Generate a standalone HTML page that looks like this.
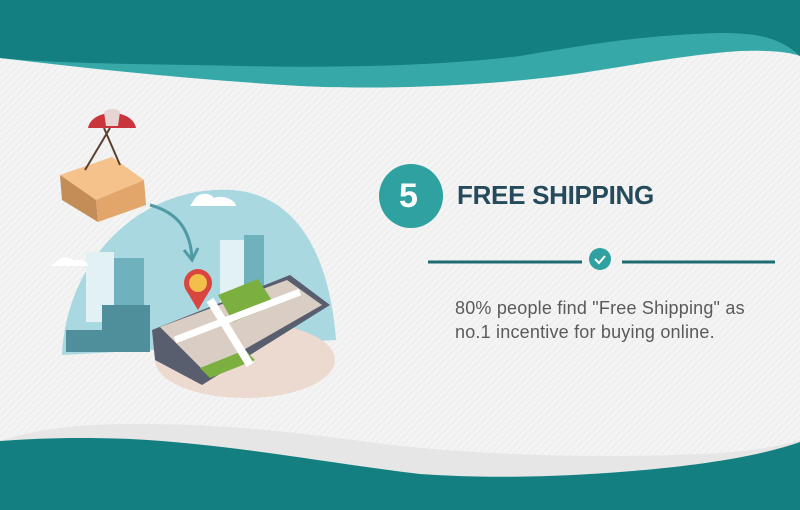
<!DOCTYPE html>
<html><head><meta charset="utf-8"><style>
html,body{margin:0;padding:0}
body{width:800px;height:510px;overflow:hidden;position:relative;background:#f2f2f2;font-family:"Liberation Sans",sans-serif}
.bg{position:absolute;inset:0;background:repeating-linear-gradient(135deg,#f4f4f4 0 3px,#efefef 3px 5px)}
</style></head><body>
<div class="bg"></div>
<svg width="800" height="510" style="position:absolute;left:0;top:0">
<path d="M0 0H800V56C790 52 770 50 740 51C680 55 620 68 560 76C480 86 380 90 300 86C200 80 100 70 0 58Z" fill="#37a8a8"/>
<path d="M0 0H800V56C780 38 760 33 720 33C640 35 580 46 520 56C440 66 340 68 240 66C150 64 60 64 0 58Z" fill="#137f80"/>
<path d="M0 441C40 428 80 424 140 424C240 424 320 436 400 446C500 456 600 458 700 454C750 452 780 446 800 440V510H0Z" fill="#e6e6e6"/>
<path d="M0 441C40 438 80 437 130 439C230 444 320 462 420 474C480 478 540 478 620 472C700 466 760 456 800 442V510H0Z" fill="#137f80"/>
<!-- illustration -->
<path d="M62 355C66 260 140 185 232 190C300 195 330 260 336 340Z" fill="#a9d8e0"/>
<rect x="86" y="252" width="28" height="70" fill="#e2f1f4"/>
<rect x="114" y="258" width="30" height="70" fill="#6fb1bc"/>
<rect x="220" y="240" width="24" height="80" fill="#e2f1f4"/>
<rect x="244" y="235" width="20" height="70" fill="#6fb1bc"/>
<path d="M66 330H102V305H150V352H66Z" fill="#4e8f9b"/>
<path d="M194 200c4-8 16-8 20-2 8-4 22 2 22 8h-46z" fill="#fff"/>
<path d="M56 262c4-6 14-6 18-1 6-3 14 1 14 5H50z" fill="#fff"/>
<path d="M150 205C176 212 190 228 192 258" stroke="#4f9aa4" stroke-width="3" fill="none"/>
<path d="M184 250l8 10 6-12" stroke="#4f9aa4" stroke-width="3" fill="none"/>
<ellipse cx="245" cy="360" rx="90" ry="38" fill="#ecd9cf"/>
<path d="M152 330L290 275L330 305L202 385L155 360Z" fill="#595e6e"/>
<path d="M160 327L287 280L322 305L205 372Z" fill="#d9cdc4"/>
<path d="M218 295L258 279L275 305L233 322Z" fill="#7bb040"/>
<path d="M200 368L245 350L255 360L210 378Z" fill="#7bb040"/>
<path d="M210 300L250 365" stroke="#fff" stroke-width="8"/>
<path d="M175 340L300 292" stroke="#fff" stroke-width="7"/>
<circle cx="198" cy="283" r="14" fill="#d9463f"/>
<path d="M186 290L198 310L210 290Z" fill="#d9463f"/>
<circle cx="198" cy="283" r="9" fill="#f1bf4a"/>
<path d="M60 175L112 157L144 180L96 200Z" fill="#f4c28a"/>
<path d="M60 175L96 200L98 222L62 200Z" fill="#c48c56"/>
<path d="M96 200L144 180L146 205L98 222Z" fill="#e2a66b"/>
<path d="M85 170L110 128M120 165L104 128" stroke="#5a4030" stroke-width="2"/>
<path d="M88 128C92 108 132 108 136 128Z" fill="#c8353a"/>
<path d="M104 112C108 108 118 108 120 112L118 126H106Z" fill="#e9d4d4"/>
<!-- right content -->
<circle cx="411" cy="196" r="32" fill="#2fa1a0"/>
<path d="M428 262H582" stroke="#1d6c72" stroke-width="3"/>
<path d="M622 262H775" stroke="#1d6c72" stroke-width="3"/>
<circle cx="600" cy="259" r="11" fill="#2fa1a0"/>
<path d="M595 259l4 4 6-7" stroke="#fff" stroke-width="2" fill="none"/>
</svg>
<div style="position:absolute;left:399px;top:177px;font-size:34px;font-weight:bold;color:#fff">5</div>
<div style="position:absolute;left:457px;top:180px;font-size:26px;font-weight:bold;color:#244a5b;letter-spacing:-0.3px">FREE SHIPPING</div>
<div style="position:absolute;left:455px;top:296px;font-size:18px;line-height:24px;color:#5a5a5a;letter-spacing:0.2px">80% people find "Free Shipping" as<br>no.1 incentive for buying online.</div>
</body></html>
